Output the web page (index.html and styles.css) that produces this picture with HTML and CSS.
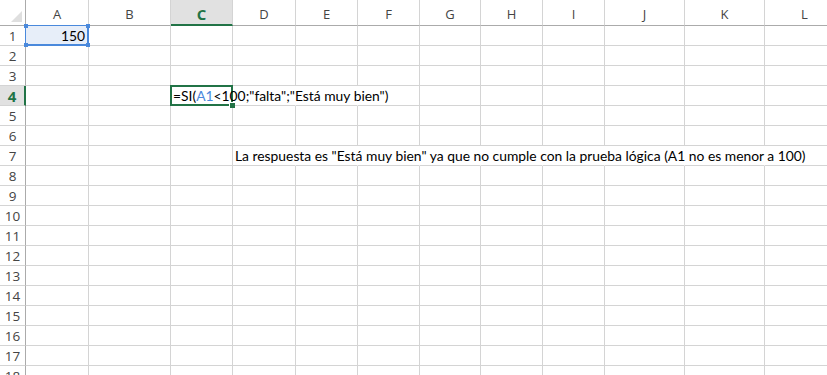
FILE: index.html
```html
<!DOCTYPE html>
<html>
<head>
    <meta charset="utf-8">
    <link rel="stylesheet" href="styles.css">
</head>
<body>
    <div class="sheet">
        <div class="corner"></div><div class="hd">A</div><div class="hd">B</div><div class="hd sel">C</div><div class="hd">D</div><div class="hd">E</div><div class="hd">F</div><div class="hd">G</div><div class="hd">H</div><div class="hd">I</div><div class="hd">J</div><div class="hd">K</div><div class="hd">L</div>

        <div class="rh">1</div><div class="c ref num">150<span class="knob tl"></span><span class="knob tr"></span><span class="knob bl"></span><span class="knob br"></span></div><div class="c"></div><div class="c"></div><div class="c"></div><div class="c"></div><div class="c"></div><div class="c"></div><div class="c"></div><div class="c"></div><div class="c"></div><div class="c"></div><div class="c"></div>
        <div class="rh">2</div><div class="c"></div><div class="c"></div><div class="c"></div><div class="c"></div><div class="c"></div><div class="c"></div><div class="c"></div><div class="c"></div><div class="c"></div><div class="c"></div><div class="c"></div><div class="c"></div>
        <div class="rh">3</div><div class="c"></div><div class="c"></div><div class="c"></div><div class="c"></div><div class="c"></div><div class="c"></div><div class="c"></div><div class="c"></div><div class="c"></div><div class="c"></div><div class="c"></div><div class="c"></div>
        <div class="rh sel">4</div><div class="c"></div><div class="c"></div><div class="c active"><span class="txt">=SI(<span class="refname">A1</span>&lt;100;"falta";"Está muy bien")</span></div><div class="c spill"></div><div class="c spill"></div><div class="c"></div><div class="c"></div><div class="c"></div><div class="c"></div><div class="c"></div><div class="c"></div><div class="c"></div>
        <div class="rh">5</div><div class="c"></div><div class="c"></div><div class="c"></div><div class="c"></div><div class="c"></div><div class="c"></div><div class="c"></div><div class="c"></div><div class="c"></div><div class="c"></div><div class="c"></div><div class="c"></div>
        <div class="rh">6</div><div class="c"></div><div class="c"></div><div class="c"></div><div class="c"></div><div class="c"></div><div class="c"></div><div class="c"></div><div class="c"></div><div class="c"></div><div class="c"></div><div class="c"></div><div class="c"></div>
        <div class="rh">7</div><div class="c"></div><div class="c"></div><div class="c"></div><div class="c spill"><span class="txt">La respuesta es "Está muy bien" ya que no cumple con la prueba lógica (A1 no es menor a 100)</span></div><div class="c spill"></div><div class="c spill"></div><div class="c spill"></div><div class="c spill"></div><div class="c spill"></div><div class="c spill"></div><div class="c spill"></div><div class="c"></div>
        <div class="rh">8</div><div class="c"></div><div class="c"></div><div class="c"></div><div class="c"></div><div class="c"></div><div class="c"></div><div class="c"></div><div class="c"></div><div class="c"></div><div class="c"></div><div class="c"></div><div class="c"></div>
        <div class="rh">9</div><div class="c"></div><div class="c"></div><div class="c"></div><div class="c"></div><div class="c"></div><div class="c"></div><div class="c"></div><div class="c"></div><div class="c"></div><div class="c"></div><div class="c"></div><div class="c"></div>
        <div class="rh">10</div><div class="c"></div><div class="c"></div><div class="c"></div><div class="c"></div><div class="c"></div><div class="c"></div><div class="c"></div><div class="c"></div><div class="c"></div><div class="c"></div><div class="c"></div><div class="c"></div>
        <div class="rh">11</div><div class="c"></div><div class="c"></div><div class="c"></div><div class="c"></div><div class="c"></div><div class="c"></div><div class="c"></div><div class="c"></div><div class="c"></div><div class="c"></div><div class="c"></div><div class="c"></div>
        <div class="rh">12</div><div class="c"></div><div class="c"></div><div class="c"></div><div class="c"></div><div class="c"></div><div class="c"></div><div class="c"></div><div class="c"></div><div class="c"></div><div class="c"></div><div class="c"></div><div class="c"></div>
        <div class="rh">13</div><div class="c"></div><div class="c"></div><div class="c"></div><div class="c"></div><div class="c"></div><div class="c"></div><div class="c"></div><div class="c"></div><div class="c"></div><div class="c"></div><div class="c"></div><div class="c"></div>
        <div class="rh">14</div><div class="c"></div><div class="c"></div><div class="c"></div><div class="c"></div><div class="c"></div><div class="c"></div><div class="c"></div><div class="c"></div><div class="c"></div><div class="c"></div><div class="c"></div><div class="c"></div>
        <div class="rh">15</div><div class="c"></div><div class="c"></div><div class="c"></div><div class="c"></div><div class="c"></div><div class="c"></div><div class="c"></div><div class="c"></div><div class="c"></div><div class="c"></div><div class="c"></div><div class="c"></div>
        <div class="rh">16</div><div class="c"></div><div class="c"></div><div class="c"></div><div class="c"></div><div class="c"></div><div class="c"></div><div class="c"></div><div class="c"></div><div class="c"></div><div class="c"></div><div class="c"></div><div class="c"></div>
        <div class="rh">17</div><div class="c"></div><div class="c"></div><div class="c"></div><div class="c"></div><div class="c"></div><div class="c"></div><div class="c"></div><div class="c"></div><div class="c"></div><div class="c"></div><div class="c"></div><div class="c"></div>
        <div class="rh">18</div><div class="c"></div><div class="c"></div><div class="c"></div><div class="c"></div><div class="c"></div><div class="c"></div><div class="c"></div><div class="c"></div><div class="c"></div><div class="c"></div><div class="c"></div><div class="c"></div>
    </div>
</body>
</html>
```
FILE: styles.css
```css
body {
  margin: 0;
  background: #fff;
  overflow: hidden;
}

.sheet {
  display: grid;
  grid-template-columns: 26px 63px 82px 62px 63px 62px 62px 61px 62px 62px 80px 80px 80px;
  grid-template-rows: 26px;
  grid-auto-rows: 20px;
  font-family: Lato, "Liberation Sans", sans-serif;
}

.sheet > div {
  box-sizing: border-box;
  position: relative;
}

/* headers */
.corner {
  border-right: 1px solid #ababab;
  border-bottom: 1px solid #ababab;
}
.corner::after {
  content: '';
  position: absolute;
  right: 3px;
  bottom: 3px;
  border-left: 11px solid transparent;
  border-bottom: 11px solid #dfdfdf;
}

.hd {
  border-right: 1px solid #d4d4d4;
  border-bottom: 1px solid #ababab;
  color: #444;
  font-family: "Open Sans", "Noto Sans", sans-serif;
  font-size: 13px;
  text-align: center;
  line-height: 28px;
}
.hd.sel {
  background: #e1e1e1;
  border-bottom: 2px solid #217346;
  color: #217346;
  font-weight: bold;
  font-size: 15px;
}

.rh {
  border-right: 1px solid #ababab;
  border-bottom: 1px solid #d4d4d4;
  color: #444;
  font-family: "Open Sans", "Noto Sans", sans-serif;
  font-size: 13.5px;
  text-align: center;
  line-height: 21px;
}
.rh.sel {
  background: #e1e1e1;
  border-right: 2px solid #217346;
  color: #217346;
  font-weight: bold;
  font-size: 15px;
}

/* cells */
.c {
  border-right: 1px solid #d4d4d4;
  border-bottom: 1px solid #d4d4d4;
  font-size: 13.85px;
  line-height: 20px;
  color: #000;
  padding: 0 2px;
  white-space: nowrap;
}
.c.spill {
  border-right-color: transparent;
}
.txt {
  position: relative;
  z-index: 2;
}
.num {
  text-align: right;
  padding-right: 3px;
}

.ref {
  background: #e7eef9;
}
.ref::before {
  content: '';
  position: absolute;
  left: -1px;
  top: -1px;
  right: -1px;
  bottom: -1px;
  border: 1px solid #4a89dc;
  border-bottom-width: 2px;
  border-right-width: 2px;
}
.knob {
  position: absolute;
  width: 4px;
  height: 4px;
  background: #4a89dc;
  z-index: 3;
}
.knob.tl { left: -2px; top: -2px; }
.knob.tr { right: -2px; top: -2px; }
.knob.bl { left: -2px; bottom: -2px; }
.knob.br { right: -2px; bottom: -2px; }

.active::before {
  content: '';
  position: absolute;
  left: -1px;
  top: -1px;
  right: -1px;
  bottom: -1px;
  border: 2px solid #217346;
  z-index: 1;
}
.active::after {
  content: '';
  position: absolute;
  right: -3px;
  bottom: -3px;
  width: 5px;
  height: 5px;
  background: #217346;
  border-left: 1px solid #fff;
  border-top: 1px solid #fff;
  z-index: 3;
}
.refname {
  color: #4a89dc;
}
```
